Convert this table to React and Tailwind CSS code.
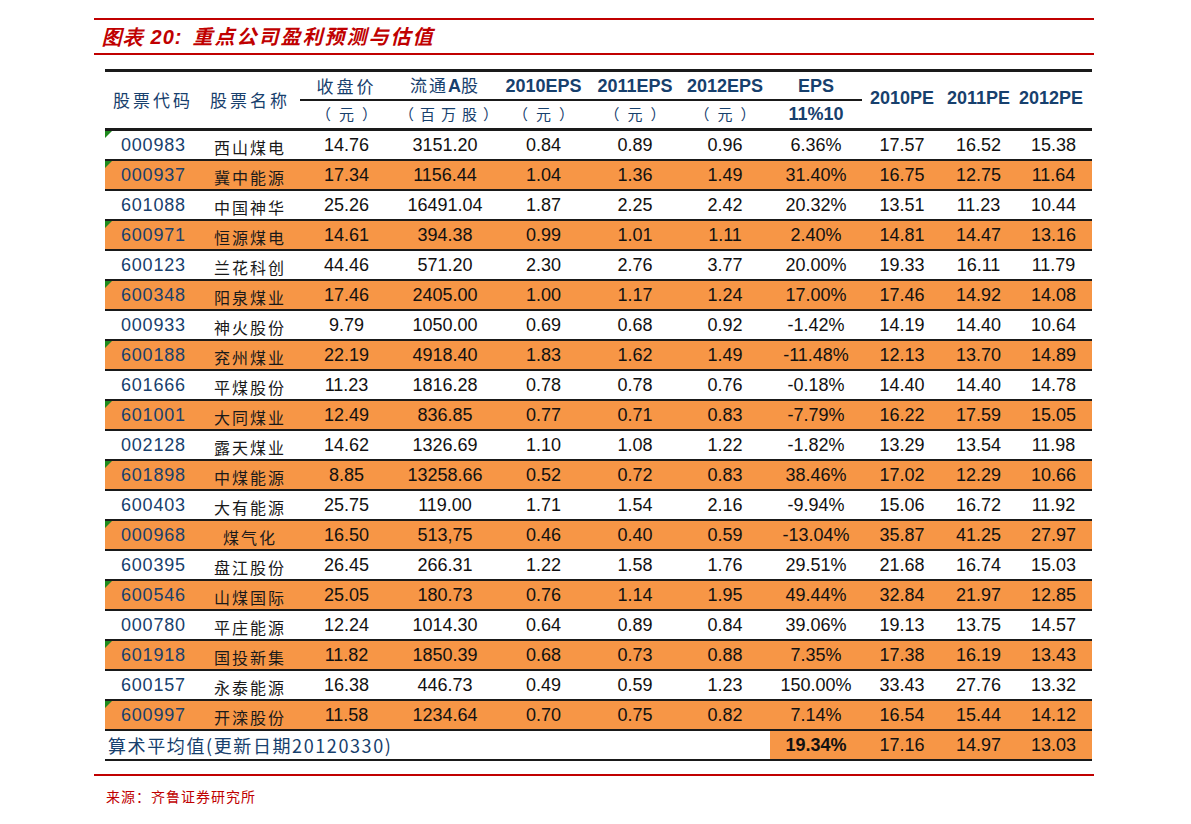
import React from "react";

const rows = [
  ["000983", "西山煤电", "14.76", "3151.20", "0.84", "0.89", "0.96", "6.36%", "17.57", "16.52", "15.38"],
  ["000937", "冀中能源", "17.34", "1156.44", "1.04", "1.36", "1.49", "31.40%", "16.75", "12.75", "11.64"],
  ["601088", "中国神华", "25.26", "16491.04", "1.87", "2.25", "2.42", "20.32%", "13.51", "11.23", "10.44"],
  ["600971", "恒源煤电", "14.61", "394.38", "0.99", "1.01", "1.11", "2.40%", "14.81", "14.47", "13.16"],
  ["600123", "兰花科创", "44.46", "571.20", "2.30", "2.76", "3.77", "20.00%", "19.33", "16.11", "11.79"],
  ["600348", "阳泉煤业", "17.46", "2405.00", "1.00", "1.17", "1.24", "17.00%", "17.46", "14.92", "14.08"],
  ["000933", "神火股份", "9.79", "1050.00", "0.69", "0.68", "0.92", "-1.42%", "14.19", "14.40", "10.64"],
  ["600188", "兖州煤业", "22.19", "4918.40", "1.83", "1.62", "1.49", "-11.48%", "12.13", "13.70", "14.89"],
  ["601666", "平煤股份", "11.23", "1816.28", "0.78", "0.78", "0.76", "-0.18%", "14.40", "14.40", "14.78"],
  ["601001", "大同煤业", "12.49", "836.85", "0.77", "0.71", "0.83", "-7.79%", "16.22", "17.59", "15.05"],
  ["002128", "露天煤业", "14.62", "1326.69", "1.10", "1.08", "1.22", "-1.82%", "13.29", "13.54", "11.98"],
  ["601898", "中煤能源", "8.85", "13258.66", "0.52", "0.72", "0.83", "38.46%", "17.02", "12.29", "10.66"],
  ["600403", "大有能源", "25.75", "119.00", "1.71", "1.54", "2.16", "-9.94%", "15.06", "16.72", "11.92"],
  ["000968", "煤气化", "16.50", "513,75", "0.46", "0.40", "0.59", "-13.04%", "35.87", "41.25", "27.97"],
  ["600395", "盘江股份", "26.45", "266.31", "1.22", "1.58", "1.76", "29.51%", "21.68", "16.74", "15.03"],
  ["600546", "山煤国际", "25.05", "180.73", "0.76", "1.14", "1.95", "49.44%", "32.84", "21.97", "12.85"],
  ["000780", "平庄能源", "12.24", "1014.30", "0.64", "0.89", "0.84", "39.06%", "19.13", "13.75", "14.57"],
  ["601918", "国投新集", "11.82", "1850.39", "0.68", "0.73", "0.88", "7.35%", "17.38", "16.19", "13.43"],
  ["600157", "永泰能源", "16.38", "446.73", "0.49", "0.59", "1.23", "150.00%", "33.43", "27.76", "13.32"],
  ["600997", "开滦股份", "11.58", "1234.64", "0.70", "0.75", "0.82", "7.14%", "16.54", "15.44", "14.12"],
];

const widths = [95, 100, 93, 104, 93, 90, 90, 92, 80, 73, 77];
const num = "font-['Liberation_Sans',Arial,sans-serif]";
const cjk = "font-['Noto_Sans_CJK_SC','Noto_Sans',sans-serif]";
const subHead = `${cjk} font-normal text-[15px] tracking-[8px] pl-[8px]`;
const topHead = `${num} font-bold text-[18px] border-b-2 border-[#1a1a1a] align-bottom pb-[2px]`;

export default function App() {
  return (
    <div className="w-[1191px] h-[824px] bg-white pt-[18px]">
      <div className="ml-[94px] w-[1000px]">
        <div className="border-t-2 border-b-2 border-[#c00000] h-[37px] flex items-center pl-[8px]">
          <span className={`text-[#c00000] italic font-bold text-[20px] ${num} tracking-[1px]`}>
            图表 20:<span className={`${cjk} ml-[10px] tracking-[2px]`}>重点公司盈利预测与估值</span>
          </span>
        </div>
      </div>

      <table className="ml-[105px] mt-[14px] border-collapse table-fixed leading-[22px]" style={{ width: 987 }}>
        <colgroup>
          {widths.map((w, i) => (
            <col key={i} style={{ width: w }} />
          ))}
        </colgroup>
        <thead className="text-[#17406d]">
          <tr className="border-t-[3px] border-[#1a1a1a] h-[29px]">
            <th rowSpan={2} className={`${cjk} font-normal text-[17px] tracking-[3px] text-left pl-[8px]`}>股票代码</th>
            <th rowSpan={2} className={`${cjk} font-normal text-[17px] tracking-[3px]`}>股票名称</th>
            <th className={`${cjk} font-normal text-[17px] tracking-[3px] border-b-2 border-[#1a1a1a] align-bottom pb-[2px]`}>收盘价</th>
            <th className={`${cjk} font-normal text-[17px] tracking-[2px] border-b-2 border-[#1a1a1a] align-bottom pb-[2px]`}>
              流通<span className={`${num} font-bold text-[18px] tracking-normal`}>A</span>股
            </th>
            <th className={topHead}>2010EPS</th>
            <th className={topHead}>2011EPS</th>
            <th className={topHead}>2012EPS</th>
            <th className={topHead}>EPS</th>
            <th rowSpan={2} className={`${num} font-bold text-[18px] pb-[4px]`}>2010PE</th>
            <th rowSpan={2} className={`${num} font-bold text-[18px] pb-[4px]`}>2011PE</th>
            <th rowSpan={2} className={`${num} font-bold text-[18px] pb-[4px] text-left pl-[4px]`}>2012PE</th>
          </tr>
          <tr className="h-[30px] border-b-[3px] border-[#1a1a1a]">
            <th className={subHead}>（元）</th>
            <th className={`${cjk} font-normal text-[15px] tracking-[6px] pl-[6px]`}>（百万股）</th>
            <th className={subHead}>（元）</th>
            <th className={subHead}>（元）</th>
            <th className={subHead}>（元）</th>
            <th className={`${num} font-bold text-[18px]`}>11%10</th>
          </tr>
        </thead>
        <tbody>
          {rows.map((r, i) => {
            const odd = i % 2 === 1;
            return (
              <tr key={r[0]} className={`h-[30px] border-b-2 border-[#1a1a1a] ${odd ? "bg-[#f79646]" : "bg-white"}`}>
                <td className={`relative ${num} text-[18px] tracking-[0.8px] text-[#17406d] pl-[16px] pt-[1px]`}>
                  {(odd || i === 0) && (
                    <span className="absolute left-0 top-0 w-0 h-0 border-t-[7px] border-r-[7px] border-t-[#1e8a1e] border-r-transparent" />
                  )}
                  {r[0]}
                </td>
                <td className={`${cjk} text-[16px] text-[#1a1a1a] text-center tracking-[2px] pt-[4px]`}>{r[1]}</td>
                {r.slice(2).map((v, j) => (
                  <td key={j} className={`${num} text-[18px] text-[#111] text-center pt-[1px]`}>
                    {v}
                  </td>
                ))}
              </tr>
            );
          })}
          <tr className="h-[30px] border-b-2 border-[#1a1a1a]">
            <td colSpan={7} className={`${cjk} text-[18px] text-[#17406d] pl-[3px] tracking-[1.6px] pt-[1px]`}>
              算术平均值(更新日期20120330)
            </td>
            <td className={`bg-[#f79646] ${num} font-bold text-[18px] text-[#111] text-center pt-[1px]`}>19.34%</td>
            <td className={`bg-[#f79646] ${num} text-[18px] text-[#111] text-center pt-[1px]`}>17.16</td>
            <td className={`bg-[#f79646] ${num} text-[18px] text-[#111] text-center pt-[1px]`}>14.97</td>
            <td className={`bg-[#f79646] ${num} text-[18px] text-[#111] text-center pt-[1px]`}>13.03</td>
          </tr>
        </tbody>
      </table>

      <div className="ml-[94px] w-[1000px] mt-[13px] border-t-2 border-[#c00000]">
        <div className={`${cjk} text-[#c00000] text-[14px] pl-[12px] pt-[10px] tracking-[1px]`}>来源：齐鲁证券研究所</div>
      </div>
    </div>
  );
}
